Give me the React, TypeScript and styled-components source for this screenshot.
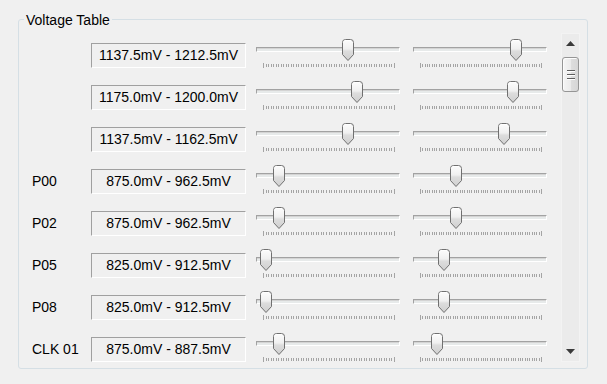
import React, { FC, useId } from "react";
import styled, { createGlobalStyle } from "styled-components";

interface VoltageRow {
  label: string;
  range: string;
  // thumb centres, in px from the left edge of each slider
  low: number;
  high: number;
}

const rows: VoltageRow[] = [
  { label: "", range: "1137.5mV - 1212.5mV", low: 92, high: 103 },
  { label: "", range: "1175.0mV - 1200.0mV", low: 101, high: 100 },
  { label: "", range: "1137.5mV - 1162.5mV", low: 92, high: 91 },
  { label: "P00", range: "875.0mV - 962.5mV", low: 23, high: 43 },
  { label: "P02", range: "875.0mV - 962.5mV", low: 23, high: 43 },
  { label: "P05", range: "825.0mV - 912.5mV", low: 9.5, high: 30.5 },
  { label: "P08", range: "825.0mV - 912.5mV", low: 9.5, high: 30.5 },
  { label: "CLK 01", range: "875.0mV - 887.5mV", low: 23, high: 24 },
];

const GlobalStyle = createGlobalStyle`
  html, body {
    margin: 0;
    padding: 0;
    background: #f0f0f0;
  }

  body {
    font-family: "Liberation Sans", Arial, sans-serif;
    font-size: 14px;
    color: #000;
  }
`;

const Window = styled.div`
  width: 607px;
  height: 384px;
  box-sizing: border-box;
  padding-top: 10px;
  background: #f0f0f0;
  overflow: hidden;
`;

const GroupBox = styled.fieldset`
  margin: 0 19px 0 18px;
  padding: 5px 7px 6px 0;
  min-width: 0;
  border: 1px solid #d5dfe5;
  border-radius: 3px;
`;

const Legend = styled.legend`
  margin-left: 5px;
  padding: 2px 2px 0;
  font-size: 14px;
  line-height: 16px;
`;

const Viewport = styled.div`
  display: flex;
  height: 329px;
`;

const RowList = styled.div`
  flex: 1;
  overflow: hidden;
  padding-top: 2px;
`;

const Row = styled.div`
  display: flex;
  align-items: flex-start;
  height: 42px;
  padding-left: 13px;
`;

const Label = styled.div`
  width: 59px;
  margin-top: 8px;
  line-height: 25px;
  white-space: nowrap;
`;

const ValueBox = styled.div`
  width: 155px;
  height: 25px;
  box-sizing: border-box;
  margin-top: 8px;
  border: 1px solid;
  border-color: #a0a0a0 #fff #fff #a0a0a0;
  line-height: 23px;
  text-align: center;
  white-space: nowrap;
`;

const SliderBox = styled.div<{ $width: number; $gap: number }>`
  position: relative;
  width: ${({ $width }) => $width}px;
  margin-left: ${({ $gap }) => $gap}px;
  padding-top: 12px;
`;

const Track = styled.div`
  height: 5px;
  box-sizing: border-box;
  border: 1px solid;
  border-color: #a2a2a2 #fff #fff #a2a2a2;
  background: #e7eaea;
  box-shadow: inset 0 1px 0 #d4d4d4;
`;

const TickStrip = styled.svg`
  display: block;
  margin-top: 10px;
`;

const ThumbShape = styled.svg`
  position: absolute;
  top: 4px;
`;

const ScrollBar = styled.div`
  width: 19px;
  box-sizing: border-box;
  display: flex;
  flex-direction: column;
  background: #ebebeb;
  border: 1px solid #f3f3f3;
`;

const ArrowButton = styled.div`
  height: 19px;
  display: flex;
  align-items: center;
  justify-content: center;
`;

const ScrollThumb = styled.div`
  width: 17px;
  height: 35px;
  box-sizing: border-box;
  margin-top: 4px;
  display: flex;
  align-items: center;
  justify-content: center;
  border: 1px solid #959595;
  border-radius: 3px;
  background: linear-gradient(to right, #f5f5f5, #ebebeb 50%, #dedede 51%, #d6d6d6);
  box-shadow: inset 1px 1px 0 #fcfcfc;
`;

const Filler = styled.div`
  flex: 1;
`;

const Ticks: FC<{ width: number }> = ({ width }) => {
  const start = 7;
  const end = width - 6;
  const steps = 52;
  const lines = [];

  for (let i = 0; i <= steps; i++) {
    const x = Math.round(start + ((end - start) * i) / steps) + 0.5;
    const tall = i === 0 || i === steps;
    lines.push(
      <line key={i} x1={x} x2={x} y1={tall ? 1 : 2} y2={tall ? 6 : 5} stroke="#a4a4a4" />
    );
  }

  return (
    <TickStrip width={width} height={6} shapeRendering="crispEdges">
      {lines}
    </TickStrip>
  );
};

const Thumb: FC<{ center: number }> = ({ center }) => {
  const id = useId();

  return (
    <ThumbShape width={12} height={23} viewBox="0 0 12 23" style={{ left: Math.round(center - 6) }}>
      <defs>
        <linearGradient id={id} x1="0" y1="0" x2="0" y2="1">
          <stop offset="0" stopColor="#fdfdfd" />
          <stop offset="0.45" stopColor="#f0f0f0" />
          <stop offset="0.55" stopColor="#dddddd" />
          <stop offset="1" stopColor="#cfcfcf" />
        </linearGradient>
      </defs>
      <path
        d="M0.5 3.5 Q0.5 0.5 3.5 0.5 H8.5 Q11.5 0.5 11.5 3.5 V15.5 L6 21.5 L0.5 15.5 Z"
        fill={`url(#${id})`}
        stroke="#707070"
      />
      <path d="M1.5 3.5 Q1.5 1.5 3.5 1.5 H8.5" fill="none" stroke="#ffffff" />
    </ThumbShape>
  );
};

const Slider: FC<{ width: number; gap: number; center: number }> = ({ width, gap, center }) => (
  <SliderBox $width={width} $gap={gap}>
    <Track />
    <Ticks width={width} />
    <Thumb center={center} />
  </SliderBox>
);

const Arrow: FC<{ up?: boolean }> = ({ up }) => (
  <svg width={9} height={5} viewBox="0 0 9 5">
    <path d={up ? "M4.5 0 L9 5 H0 Z" : "M0 0 H9 L4.5 5 Z"} fill="#3a3a3a" />
  </svg>
);

const Grip = () => (
  <svg width={8} height={10} viewBox="0 0 8 10" shapeRendering="crispEdges">
    {[0, 4, 8].map((y) => (
      <g key={y}>
        <line x1={0} x2={8} y1={y + 0.5} y2={y + 0.5} stroke="#5e5e5e" />
        <line x1={0} x2={8} y1={y + 1.5} y2={y + 1.5} stroke="#ffffff" />
      </g>
    ))}
  </svg>
);

const App: FC = () => (
  <Window>
    <GlobalStyle />
    <GroupBox>
      <Legend>Voltage Table</Legend>
      <Viewport>
        <RowList>
          {rows.map((row, i) => (
            <Row key={i}>
              <Label>{row.label}</Label>
              <ValueBox>{row.range}</ValueBox>
              <Slider width={144} gap={10} center={row.low} />
              <Slider width={134} gap={13} center={row.high} />
            </Row>
          ))}
        </RowList>

        <ScrollBar>
          <ArrowButton>
            <Arrow up />
          </ArrowButton>
          <ScrollThumb>
            <Grip />
          </ScrollThumb>
          <Filler />
          <ArrowButton>
            <Arrow />
          </ArrowButton>
        </ScrollBar>
      </Viewport>
    </GroupBox>
  </Window>
);

export default App;
